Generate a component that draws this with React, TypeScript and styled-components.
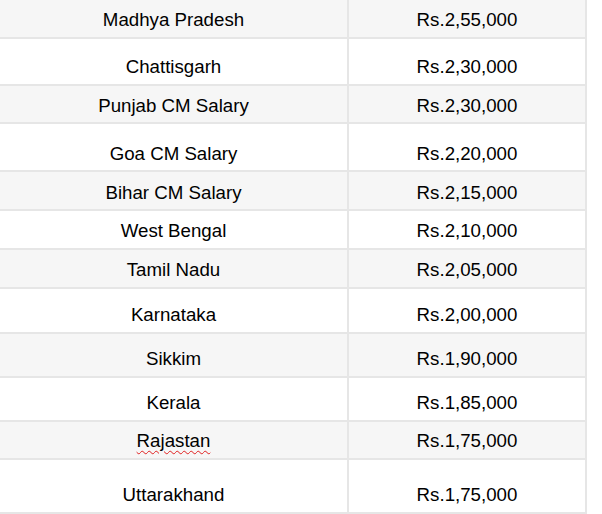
import React from "react";
import styled, { createGlobalStyle } from "styled-components";

const GlobalStyle = createGlobalStyle`
  html, body {
    margin: 0;
    padding: 0;
    background: #ffffff;
  }
  body {
    font-family: "Liberation Sans", Arial, sans-serif;
  }
`;

type Row = {
  state: string;
  salary: string;
  height: number;
  pad: number;
  typo?: boolean;
};

const rows: Row[] = [
  { state: "Madhya Pradesh", salary: "Rs.2,55,000", height: 37, pad: 9 },
  { state: "Chattisgarh", salary: "Rs.2,30,000", height: 45, pad: 17 },
  { state: "Punjab CM Salary", salary: "Rs.2,30,000", height: 36, pad: 9 },
  { state: "Goa CM Salary", salary: "Rs.2,20,000", height: 46, pad: 19 },
  { state: "Bihar CM Salary", salary: "Rs.2,15,000", height: 37, pad: 10 },
  { state: "West Bengal", salary: "Rs.2,10,000", height: 37, pad: 9 },
  { state: "Tamil Nadu", salary: "Rs.2,05,000", height: 37, pad: 9 },
  { state: "Karnataka", salary: "Rs.2,00,000", height: 43, pad: 15 },
  { state: "Sikkim", salary: "Rs.1,90,000", height: 42, pad: 14 },
  { state: "Kerala", salary: "Rs.1,85,000", height: 42, pad: 14 },
  { state: "Rajastan", salary: "Rs.1,75,000", height: 36, pad: 8, typo: true },
  { state: "Uttarakhand", salary: "Rs.1,75,000", height: 52, pad: 24 },
];

export default function App() {
  return (
    <>
      <GlobalStyle />
      <Table>
        {rows.map((r, i) => (
          <TableRow key={r.state} striped={i % 2 === 0}>
            <Cell h={r.height} pad={r.pad} divider>
              {r.typo ? <Misspelt>{r.state}</Misspelt> : r.state}
            </Cell>
            <Cell h={r.height} pad={r.pad}>
              {r.salary}
            </Cell>
          </TableRow>
        ))}
      </Table>
    </>
  );
}

const Table = styled.div`
  width: 585px;
  border-right: 2px solid #e6e6e6;
  display: flex;
  flex-direction: column;
`;

const TableRow = styled.div<{ striped: boolean }>`
  display: grid;
  grid-template-columns: 349px 236px;
  background: ${(p) => (p.striped ? "#f6f6f6" : "#ffffff")};
  border-bottom: 2px solid #e6e6e6;
`;

const Cell = styled.div<{ h: number; pad: number; divider?: boolean }>`
  height: ${(p) => p.h}px;
  box-sizing: border-box;
  padding-top: ${(p) => p.pad}px;
  text-align: center;
  font-size: 18.7px;
  line-height: 21px;
  color: #000000;
  border-right: ${(p) => (p.divider ? "2px solid #e6e6e6" : "none")};
  white-space: nowrap;
`;

const Misspelt = styled.span`
  text-decoration: underline wavy #e02020;
  text-decoration-thickness: 1px;
  text-underline-offset: 3px;
`;
